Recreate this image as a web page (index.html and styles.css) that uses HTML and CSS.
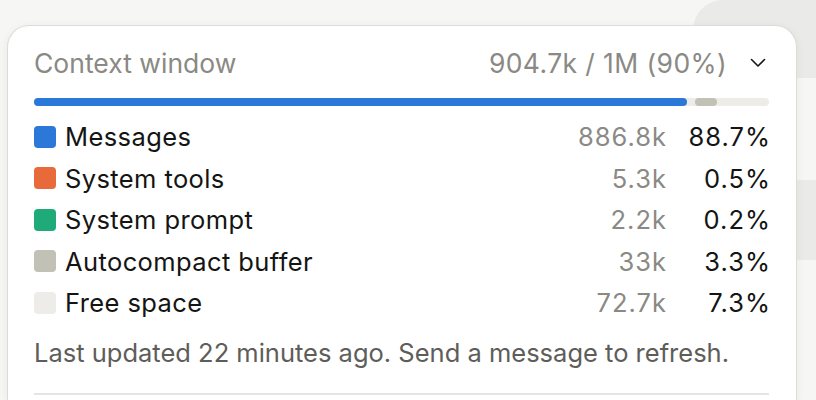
FILE: index.html
```html
<!DOCTYPE html>
<html lang="en">
<head>
  <meta charset="UTF-8">
  <meta name="viewport" content="width=device-width, initial-scale=1.0">
  <title>Context window</title>
  <link rel="stylesheet" href="styles.css">
</head>
<body>
  <div class="blob blob-top"></div>
  <div class="blob blob-mid"></div>

  <div class="panel">
    <div class="panel-head">
      <span class="title">Context window</span>
      <span class="total">904.7k / 1M (90%)</span>
      <svg class="chevron" width="16" height="10" viewBox="0 0 16 10">
        <path d="M1.5 1.5 L8 8 L14.5 1.5" fill="none" stroke="#141413" stroke-width="1.6" stroke-linecap="round" stroke-linejoin="round"/>
      </svg>
    </div>

    <div class="usage-bar">
      <div class="seg seg-messages" style="width: 88.8%"></div>
      <div class="seg seg-buffer" style="width: 3%"></div>
    </div>

    <ul class="legend">
      <li class="item">
        <span class="swatch messages"></span>
        <span class="label">Messages</span>
        <span class="tokens">886.8k</span>
        <span class="pct">88.7%</span>
      </li>
      <li class="item">
        <span class="swatch tools"></span>
        <span class="label">System tools</span>
        <span class="tokens">5.3k</span>
        <span class="pct">0.5%</span>
      </li>
      <li class="item">
        <span class="swatch prompt"></span>
        <span class="label">System prompt</span>
        <span class="tokens">2.2k</span>
        <span class="pct">0.2%</span>
      </li>
      <li class="item">
        <span class="swatch buffer"></span>
        <span class="label">Autocompact buffer</span>
        <span class="tokens">33k</span>
        <span class="pct">3.3%</span>
      </li>
      <li class="item">
        <span class="swatch free"></span>
        <span class="label">Free space</span>
        <span class="tokens">72.7k</span>
        <span class="pct">7.3%</span>
      </li>
    </ul>

    <p class="note">Last updated 22 minutes ago. Send a message to refresh.</p>
    <div class="divider"></div>
  </div>
</body>
</html>
```

FILE: styles.css
```css
html, body {
  margin: 0;
  height: 100%;
  overflow: hidden;
}
body {
  font-family: Inter, "Noto Sans", sans-serif;
  background-color: #f6f6f4;
  color: #141413;
  padding: 25px 0 0 7px;
  box-sizing: border-box;
  position: relative;
}

/* background shapes peeking out behind the panel */
.blob {
  position: absolute;
  right: 0;
  background-color: #eaeae8;
}
.blob-top {
  left: 693px;
  top: 0;
  height: 78px;
  border-radius: 30px 0 0 34px;
}
.blob-mid {
  left: 740px;
  top: 180px;
  height: 80px;
  border-radius: 40px 0 0 40px;
}

.panel {
  position: relative;
  width: 790px;
  height: 375px;
  box-sizing: border-box;
  background-color: #fff;
  border: 1px solid #dedcd6;
  border-bottom: none;
  border-radius: 22px 22px 0 0;
  padding: 19px 25px 0 26px;
  box-shadow: 0 2px 10px rgba(0, 0, 0, 0.06);
}

.panel-head {
  display: flex;
  align-items: center;
  font-size: 26.5px;
  line-height: 36px;
  color: #8a8984;
}
.title {
  flex: 1;
}
.total {
  letter-spacing: 0.4px;
}
.chevron {
  margin-left: 23px;
  margin-right: 5px;
}

.usage-bar {
  display: flex;
  gap: 8px;
  height: 8px;
  margin-top: 17px;
  margin-right: 2px;
  background-color: #edece9;
  border-radius: 4px;
}
.seg {
  height: 100%;
  border-radius: 4px;
}
.seg-messages {
  background-color: #2c78d8;
}
.seg-buffer {
  background-color: #c2c1b5;
}

.legend {
  list-style: none;
  margin: 10px 0 0;
  padding: 0;
}
.item {
  display: flex;
  align-items: center;
  height: 41.5px;
  font-size: 25.5px;
}
.swatch {
  width: 22px;
  height: 22px;
  border-radius: 4px;
  margin-right: 9px;
}
.swatch.messages { background-color: #2c78d8; }
.swatch.tools { background-color: #e8693a; }
.swatch.prompt { background-color: #1fab79; }
.swatch.buffer { background-color: #c2c1b5; }
.swatch.free { background-color: #edece9; }
.label {
  flex: 1;
  letter-spacing: 0.4px;
}
.tokens {
  color: #8a8984;
  letter-spacing: 1px;
}
.pct {
  width: 104px;
  text-align: right;
  letter-spacing: 1px;
}

.note {
  margin: 11px 0 0;
  font-size: 25.5px;
  line-height: 36px;
  color: #5e5d59;
}
.divider {
  margin-top: 22px;
  margin-right: 2px;
  height: 2px;
  background-color: #e6e5e1;
}
```
